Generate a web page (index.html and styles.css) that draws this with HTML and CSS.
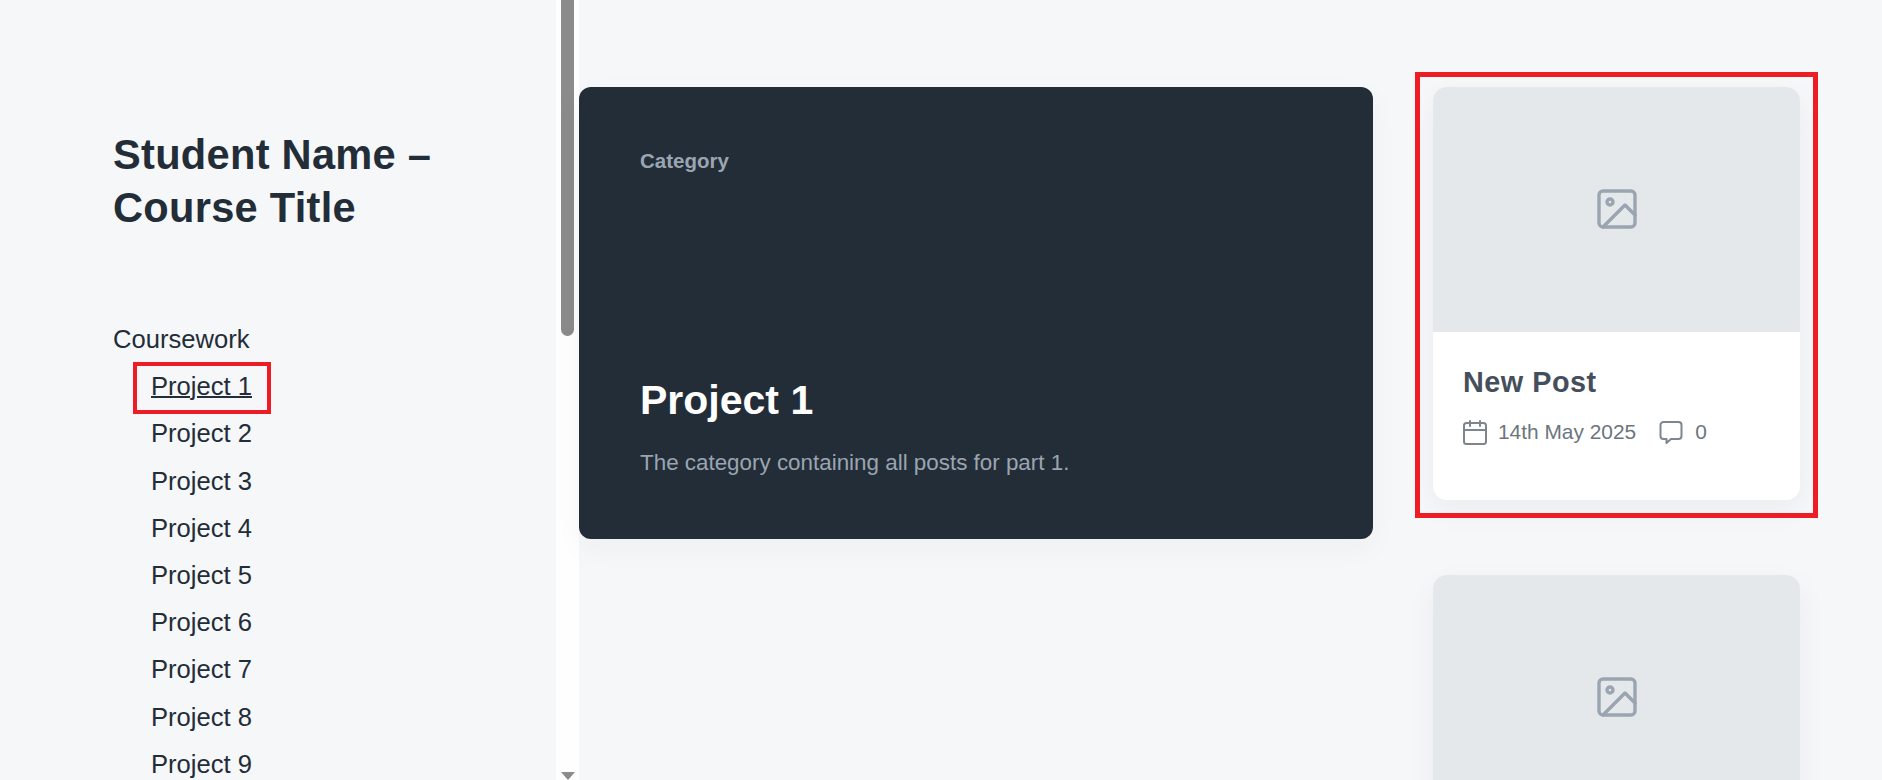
FILE: index.html
```html
<!DOCTYPE html>
<html lang="en">
<head>
<meta charset="utf-8">
<title>Student Name – Course Title</title>
<link rel="stylesheet" href="styles.css">
</head>
<body>
<div class="page">
  <aside class="sidebar">
    <h1 class="site-title">Student Name – Course Title</h1>
    <nav class="nav">
      <div class="nav-parent">Coursework</div>
      <ul class="nav-list">
        <li class="nav-item"><a class="nav-link nav-link-current" href="#">Project 1</a></li>
        <li class="nav-item"><a class="nav-link" href="#">Project 2</a></li>
        <li class="nav-item"><a class="nav-link" href="#">Project 3</a></li>
        <li class="nav-item"><a class="nav-link" href="#">Project 4</a></li>
        <li class="nav-item"><a class="nav-link" href="#">Project 5</a></li>
        <li class="nav-item"><a class="nav-link" href="#">Project 6</a></li>
        <li class="nav-item"><a class="nav-link" href="#">Project 7</a></li>
        <li class="nav-item"><a class="nav-link" href="#">Project 8</a></li>
        <li class="nav-item"><a class="nav-link" href="#">Project 9</a></li>
      </ul>
    </nav>
  </aside>
  <div class="scrollbar">
    <div class="scroll-thumb"></div>
    <div class="scroll-arrow"></div>
  </div>
  <main class="main">
    <section class="hero">
      <div class="hero-label">Category</div>
      <div class="hero-body">
        <h2 class="hero-title">Project 1</h2>
        <p class="hero-desc">The category containing all posts for part 1.</p>
      </div>
    </section>
    <div class="posts">
      <article class="card card-marked">
        <div class="card-media">
          <svg class="media-icon" viewBox="0 0 24 24"><rect x="3" y="3" width="18" height="18" rx="2"/><circle cx="8.5" cy="8.5" r="1.5"/><polyline points="21 15 16 10 5 21"/></svg>
        </div>
        <div class="card-body">
          <h3 class="card-title">New Post</h3>
          <div class="card-meta">
            <svg class="meta-icon" viewBox="0 0 24 25"><rect x="1" y="3" width="22" height="21" rx="2.5"/><line x1="17" y1="1" x2="17" y2="6"/><line x1="7" y1="1" x2="7" y2="6"/><line x1="1" y1="10" x2="23" y2="10"/></svg>
            <span class="meta-text">14th May 2025</span>
            <svg class="meta-icon meta-icon-comment" viewBox="0 0 24 24"><path d="M4.500 1.500h15a3 3 0 0 1 3 3v11a3 3 0 0 1-3 3H12l-4.500 4v-4h-3a3 3 0 0 1-3-3v-11a3 3 0 0 1 3-3z"/></svg>
            <span class="meta-text">0</span>
          </div>
        </div>
      </article>
      <article class="card">
        <div class="card-media">
          <svg class="media-icon" viewBox="0 0 24 24"><rect x="3" y="3" width="18" height="18" rx="2"/><circle cx="8.5" cy="8.5" r="1.5"/><polyline points="21 15 16 10 5 21"/></svg>
        </div>
      </article>
    </div>
  </main>
</div>
</body>
</html>
```

FILE: styles.css
```css
* { box-sizing: border-box; }
html, body { margin: 0; height: 100%; overflow: hidden; }
body {
  background: #f6f7f9;
  color: #232d38;
  font-family: "Liberation Sans", Arial, sans-serif;
}
.page { display: flex; height: 780px; overflow: hidden; }

.sidebar { width: 556px; flex: none; padding: 128px 0 0 113px; overflow: hidden; }
.site-title {
  margin: 0 0 82px;
  width: 400px;
  font-size: 41.6px;
  line-height: 53px;
  font-weight: 700;
  letter-spacing: 0.28px;
}
.nav { font-size: 25.6px; line-height: 47.2px; }
.nav-parent { height: 47.2px; }
.nav-list { list-style: none; margin: 0; padding: 0 0 0 38px; }
.nav-item { height: 47.2px; }
.nav-link { color: #232d38; text-decoration: none; }
.nav-link-current { position: relative; text-decoration: underline; text-decoration-thickness: 2px; }
.nav-link-current::after {
  content: "";
  position: absolute;
  left: -18px; right: -19px; top: -10px; bottom: -14px;
  border: 4px solid #ee1c25;
}

.scrollbar {
  width: 23px;
  flex: none;
  background: #fefefe;
  display: flex;
  flex-direction: column;
  align-items: center;
}
.scroll-thumb {
  width: 13px;
  height: 336px;
  background: #8b8b8b;
  border-radius: 0 0 6.500px 6.500px;
}
.scroll-arrow {
  margin-top: auto;
  width: 0; height: 0;
  border-left: 7.500px solid transparent;
  border-right: 7.500px solid transparent;
  border-top: 8px solid #8b8b8b;
}

.main { flex: 1; display: flex; align-items: flex-start; gap: 60px; padding-top: 87px; }
.hero {
  width: 794px;
  height: 452px;
  flex: none;
  background: #232d38;
  border-radius: 12px;
  padding: 61px;
  display: flex;
  flex-direction: column;
  justify-content: space-between;
  box-shadow: 0 10px 30px rgba(35, 45, 56, 0.04);
}
.hero-label { font-size: 20.5px; line-height: 26px; font-weight: 700; color: #9aa5b1; }
.hero-title { margin: 0 0 22px; font-size: 41px; line-height: 50px; font-weight: 700; color: #fff; }
.hero-desc { margin: 0; font-size: 22.4px; line-height: 32px; color: #9aa5b1; }
.hero-body { margin-bottom: -1px; }

.posts { width: 367px; flex: none; display: flex; flex-direction: column; gap: 75px; }
.card {
  position: relative;
  background: #fff;
  border-radius: 14px;
  box-shadow: 0 10px 30px rgba(35, 45, 56, 0.05);
}
.card-marked::after {
  content: "";
  position: absolute;
  left: -18px; right: -18px; top: -15px; bottom: -18px;
  border: 5px solid #ee1c25;
  pointer-events: none;
}
.card-media {
  height: 245px;
  background: #e5e8eb;
  border-radius: 14px 14px 0 0;
  display: flex;
  align-items: center;
  justify-content: center;
  padding-bottom: 1px;
}
.media-icon { width: 48px; height: 48px; fill: none; stroke: #9aa5b1; stroke-width: 1.700; stroke-linecap: round; stroke-linejoin: round; }
.card-body { height: 168px; padding: 32px 30px 0; }
.card-title { margin: 0 0 19px; font-size: 28.8px; line-height: 36px; font-weight: 700; color: #454f5b; letter-spacing: 0.5px; }
.card-meta { display: flex; align-items: center; color: #6c757d; font-size: 20.9px; line-height: 26px; }
.meta-icon { width: 24px; height: 25px; fill: none; stroke: #7d858d; stroke-width: 2; stroke-linecap: round; stroke-linejoin: round; margin-right: 11px; flex: none; }
.meta-icon-comment { margin-left: 23px; margin-right: 12px; }
.meta-text { white-space: nowrap; }
```
